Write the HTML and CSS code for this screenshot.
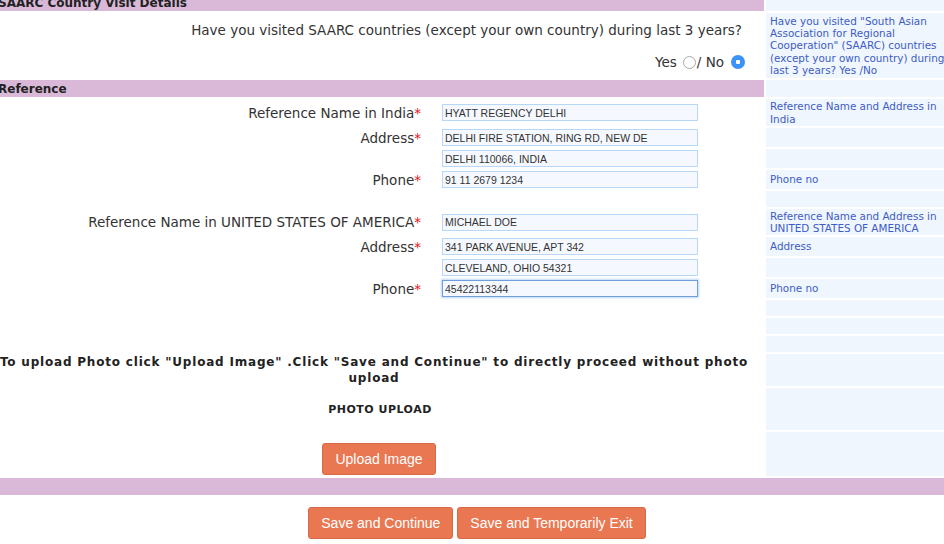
FILE: index.html
```html
<!DOCTYPE html>
<html>
<head>
<meta charset="utf-8">
<link rel="stylesheet" href="styles.css">
</head>
<body>
<div class="form">
  <div class="sec-head">SAARC Country Visit Details</div>
  <div class="help"></div>

  <div class="question">
    <div class="q-text">Have you visited SAARC countries (except your own country) during last 3 years?</div>
    <div class="q-answer">Yes <input type="radio" name="saarc" class="radio">/ No <input type="radio" name="saarc" class="radio" checked></div>
  </div>
  <div class="help">Have you visited "South Asian Association for Regional Cooperation" (SAARC) countries (except your own country) during last 3 years? Yes /No</div>

  <div class="sec-head">Reference</div>
  <div class="help"></div>

  <div class="label">Reference Name in India<span class="req">*</span></div>
  <div class="field"><input class="txt" type="text" value="HYATT REGENCY DELHI"></div>
  <div class="help">Reference Name and Address in India</div>

  <div class="label">Address<span class="req">*</span></div>
  <div class="field"><input class="txt" type="text" value="DELHI FIRE STATION, RING RD, NEW DE"></div>
  <div class="help"></div>

  <div class="label"></div>
  <div class="field"><input class="txt" type="text" value="DELHI 110066, INDIA"></div>
  <div class="help"></div>

  <div class="label">Phone<span class="req">*</span></div>
  <div class="field"><input class="txt" type="text" value="91 11 2679 1234"></div>
  <div class="help">Phone no</div>

  <div class="blank"></div>
  <div class="help"></div>

  <div class="label">Reference Name in UNITED STATES OF AMERICA<span class="req">*</span></div>
  <div class="field"><input class="txt" type="text" value="MICHAEL DOE"></div>
  <div class="help">Reference Name and Address in UNITED STATES OF AMERICA</div>

  <div class="label">Address<span class="req">*</span></div>
  <div class="field"><input class="txt" type="text" value="341 PARK AVENUE, APT 342"></div>
  <div class="help">Address</div>

  <div class="label"></div>
  <div class="field"><input class="txt" type="text" value="CLEVELAND, OHIO 54321"></div>
  <div class="help"></div>

  <div class="label">Phone<span class="req">*</span></div>
  <div class="field"><input class="txt focus" type="text" value="45422113344"></div>
  <div class="help">Phone no</div>

  <div class="blank"></div>
  <div class="help"></div>
  <div class="blank"></div>
  <div class="help"></div>
  <div class="blank"></div>
  <div class="help"></div>

  <div class="note">To upload Photo click "Upload Image" .Click "Save and Continue" to directly proceed without photo upload</div>
  <div class="help"></div>

  <div class="photo-title">PHOTO UPLOAD</div>
  <div class="help"></div>

  <div class="upload-cell"><button class="btn" type="button">Upload Image</button></div>
  <div class="help"></div>

  <div class="foot-bar"></div>
</div>
<div class="actions">
  <button class="btn" type="button">Save and Continue</button>
  <button class="btn" type="button">Save and Temporarily Exit</button>
</div>
</body>
</html>
```
FILE: styles.css
```css
html, body {
  margin: 0;
  padding: 0;
  background: #ffffff;
  overflow: hidden;
}

body {
  font-family: "DejaVu Sans", Verdana, sans-serif;
  font-size: 13.5px;
  color: #333333;
}

.form {
  display: grid;
  width: 954px;
  margin: -6px 0 0 -2px;
  grid-template-columns: 430px 334px 186px;
  grid-template-rows: 17px 65px 17px 27px 19px 19px 19px 16px 26px 19px 19px 19px 16px 16px 16px 32px 42px 44px 17px;
  gap: 2px;
}

.sec-head {
  grid-column: 1 / 3;
  background: #dab9d8;
  font-weight: bold;
  font-size: 12px;
  line-height: 18px;
  color: #222222;
}

.help {
  background: #f0f6fd;
  color: #3d5cc6;
  font-size: 10.4px;
  line-height: 12.3px;
  padding: 0 4px;
  display: flex;
  align-items: center;
  overflow: hidden;
}

.question {
  grid-column: 1 / 3;
  display: flex;
  flex-direction: column;
  align-items: flex-end;
  justify-content: space-between;
  padding: 9px 18px 8px 0;
  line-height: 16px;
}

.q-text {
  margin-right: 4px;
}

.q-answer {
  display: flex;
  align-items: center;
}

.radio {
  appearance: none;
  -webkit-appearance: none;
  width: 13px;
  height: 13px;
  margin: 0 1px 0 6px;
  border: 1px solid #a9a9a9;
  border-radius: 50%;
  background: #ffffff;
  box-sizing: border-box;
}

.radio:checked {
  border: none;
  background: radial-gradient(circle, #ffffff 0 2px, #3b93f7 2.5px);
  margin-left: 7px;
  width: 14px;
  height: 14px;
}

.label {
  grid-column: 1;
  display: flex;
  align-items: center;
  justify-content: flex-end;
  padding-right: 7px;
  white-space: nowrap;
}

.req {
  color: #e8171b;
}

.field {
  grid-column: 2;
  display: flex;
  align-items: center;
  padding-left: 12px;
}

.txt {
  width: 256px;
  height: 17px;
  box-sizing: border-box;
  border: 1px solid #b7d7f6;
  background: #f5f9ff;
  font-family: "Liberation Sans", Arial, sans-serif;
  font-size: 10.5px;
  color: #333333;
  padding: 0 2px;
  margin: 0;
  outline: none;
}

.txt.focus {
  border: 1px solid #6f9fd8;
  box-shadow: 0 0 2px 1px #bcd6f3;
}

.blank {
  grid-column: 1 / 3;
}

.note {
  grid-column: 1 / 3;
  text-align: center;
  font-weight: bold;
  font-size: 12px;
  letter-spacing: 0.8px;
  line-height: 16px;
  color: #222222;
  padding: 0 14px 0 0;
}

.photo-title {
  grid-column: 1 / 3;
  display: flex;
  align-items: center;
  justify-content: center;
  font-weight: bold;
  font-size: 11px;
  letter-spacing: 0.5px;
  color: #222222;
  padding-left: 1px;
  padding-right: 3px;
}

.upload-cell {
  grid-column: 1 / 3;
  display: flex;
  align-items: flex-end;
  justify-content: center;
  padding: 0 4px 1px 0;
}

.foot-bar {
  grid-column: 1 / 4;
  background: #dab9d8;
}

.btn {
  font-family: "Liberation Sans", Arial, sans-serif;
  font-size: 14px;
  line-height: 20px;
  color: #ffffff;
  background: #e97852;
  border: 1px solid #d76a44;
  border-radius: 3px;
  padding: 5px 12px;
  margin: 0;
  height: 32px;
  box-sizing: border-box;
}

.actions {
  display: flex;
  justify-content: center;
  gap: 4px;
  width: 954px;
  margin: 12px 0 0 -2px;
  padding-left: 4px;
  box-sizing: border-box;
}
```
